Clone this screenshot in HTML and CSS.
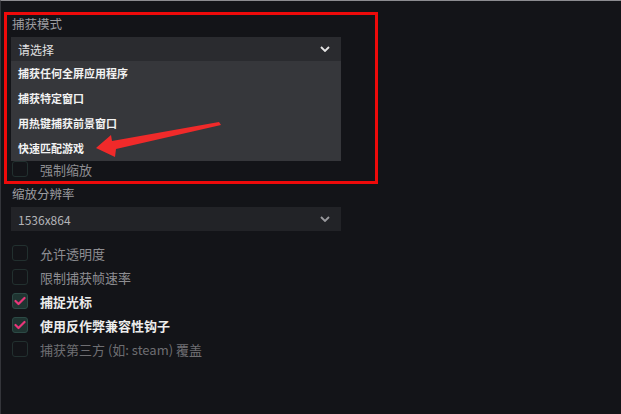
FILE: index.html
```html
<!DOCTYPE html>
<html lang="zh-CN">
<head>
  <meta charset="UTF-8">
  <title>捕获设置</title>
  <link rel="stylesheet" href="styles.css">
</head>
<body>

<div class="panel">
  <div class="field-label">捕获模式</div>
  <div class="select open">
    <span>请选择</span>
    <svg class="chevron" width="10" height="6" viewBox="0 0 10 6"><path d="M1 1l4 4 4-4" fill="none" stroke="#e6e6e6" stroke-width="1.8"/></svg>
  </div>
  <ul class="select-menu">
    <li>捕获任何全屏应用程序</li>
    <li>捕获特定窗口</li>
    <li>用热键捕获前景窗口</li>
    <li>快速匹配游戏</li>
  </ul>

  <label class="check-row first">
    <span class="box"></span>
    <span class="check-text">强制缩放</span>
  </label>

  <div class="field-label gap">缩放分辨率</div>
  <div class="select dim">
    <span>1536x864</span>
    <svg class="chevron" width="10" height="6" viewBox="0 0 10 6"><path d="M1 1l4 4 4-4" fill="none" stroke="#9a9a9e" stroke-width="1.8"/></svg>
  </div>

  <div class="check-list">
    <label class="check-row">
      <span class="box"></span>
      <span class="check-text">允许透明度</span>
    </label>
    <label class="check-row">
      <span class="box"></span>
      <span class="check-text">限制捕获帧速率</span>
    </label>
    <label class="check-row checked">
      <span class="box"><svg width="12" height="10" viewBox="0 0 12 10"><path d="M1.5 5l3 3 6-6" fill="none" stroke="#e8367a" stroke-width="2.2" stroke-linecap="round" stroke-linejoin="round"/></svg></span>
      <span class="check-text">捕捉光标</span>
    </label>
    <label class="check-row checked">
      <span class="box"><svg width="12" height="10" viewBox="0 0 12 10"><path d="M1.5 5l3 3 6-6" fill="none" stroke="#e8367a" stroke-width="2.2" stroke-linecap="round" stroke-linejoin="round"/></svg></span>
      <span class="check-text">使用反作弊兼容性钩子</span>
    </label>
    <label class="check-row faded">
      <span class="box"></span>
      <span class="check-text">捕获第三方 (如: steam) 覆盖</span>
    </label>
  </div>
</div>

<!-- annotation: red frame and arrow -->
<div class="mark-box"></div>
<svg class="mark-arrow" width="621" height="414" viewBox="0 0 621 414">
  <polygon points="96,148 111,135 112,141 219,122 221,125 116,149 115,157" fill="#f02a2a"/>
</svg>

</body>
</html>
```

FILE: styles.css
```css
body {
  margin: 0;
  height: 413px;
  overflow: hidden;
  background-color: #131418;
  border-top: 1px solid #8c8c90;
  border-left: 1px solid #34353a;
  font-family: "Noto Sans CJK SC", "Noto Sans", sans-serif;
  position: relative;
}

.panel {
  padding: 14px 0 0 10px;
  width: 330px;
}

.field-label {
  font-size: 12.5px;
  line-height: 18px;
  color: #9c9ca0;
  padding-left: 1px;
}

.field-label.gap {
  margin-top: 8px;
}

.select {
  margin-top: 4px;
  height: 24px;
  background: #2a2b2f;
  display: flex;
  align-items: center;
  justify-content: space-between;
  padding: 0 11px 0 7px;
  font-size: 12px;
  color: #e2e2e2;
}

.select.dim {
  background: #222327;
  color: #b4b4b8;
}

.select-menu {
  list-style: none;
  margin: 0;
  padding: 0;
  background: #36373b;
}

.select-menu li {
  height: 25px;
  line-height: 25px;
  padding-left: 7px;
  font-size: 11px;
  font-weight: bold;
  color: #f2f2f2;
}

.check-list {
  margin-top: 10px;
}

.check-row {
  display: flex;
  align-items: center;
  gap: 12px;
  height: 24px;
  padding-left: 1px;
}

.check-row.first {
  height: 16px;
}

.box {
  width: 14px;
  height: 14px;
  border: 1.5px solid #22302f;
  border-radius: 3px;
  display: flex;
  align-items: center;
  justify-content: center;
}

.check-row.checked .box {
  background: #1f3431;
  border-color: #2c4a45;
}

.check-text {
  font-size: 13px;
  color: #8e8e92;
}

.check-row.checked .check-text {
  color: #ececec;
  font-weight: bold;
}

.check-row.faded .check-text {
  color: #6e6e72;
}

.mark-box {
  position: absolute;
  left: 3px;
  top: 11px;
  width: 368px;
  height: 166px;
  border: 3px solid #ee0a0a;
}

.mark-arrow {
  position: absolute;
  left: -1px;
  top: -1px;
}
```
